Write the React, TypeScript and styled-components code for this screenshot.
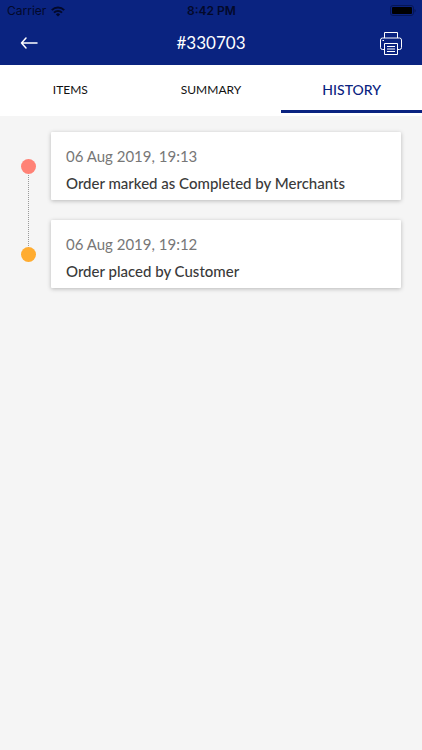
import React, { useState } from "react";
import styled, { createGlobalStyle } from "styled-components";

const GlobalStyle = createGlobalStyle`
  *, *::before, *::after { box-sizing: border-box; }
  body {
    margin: 0;
    background: #f5f5f5;
    font-family: Lato, "Liberation Sans", sans-serif;
  }
`;

const Page = styled.div`
  display: flex;
  flex-direction: column;
  min-height: 100vh;
  background: #f5f5f5;
`;

const Header = styled.header`
  background: #0a2380;
`;

const StatusBar = styled.div`
  display: grid;
  grid-template-columns: 1fr auto 1fr;
  align-items: center;
  height: 22px;
  padding: 0 6px 0 7px;
  color: #03092a;
  font-family: Inter, "Liberation Sans", sans-serif;
  font-size: 12px;
  line-height: 16px;
`;

const Carrier = styled.span`
  display: flex;
  align-items: center;
  gap: 5px;
`;

const Clock = styled.time`
  font-weight: 600;
`;

const Battery = styled.span`
  display: flex;
  justify-content: flex-end;
`;

const AppBar = styled.div`
  display: grid;
  grid-template-columns: 1fr auto 1fr;
  align-items: center;
  height: 43px;
  padding: 0 20px 1px;
`;

const Title = styled.h1`
  margin: 0;
  color: #fff;
  font-size: 17px;
  font-weight: 400;
  line-height: 24px;
`;

const IconButton = styled.button<{ $end?: boolean }>`
  display: flex;
  justify-self: ${({ $end }) => ($end ? "end" : "start")};
  padding: 0;
  border: 0;
  background: none;
  color: #fff;
  cursor: pointer;
`;

const Tabs = styled.div`
  display: grid;
  grid-template-columns: repeat(3, 1fr);
  height: 51px;
  padding-bottom: 3px;
  background: #fff;
`;

const Tab = styled.button<{ $active: boolean }>`
  padding: 5px 0 0;
  border: 0;
  border-bottom: 3px solid ${({ $active }) => ($active ? "#0a2380" : "transparent")};
  background: none;
  color: ${({ $active }) => ($active ? "#0a2380" : "#111")};
  font-family: inherit;
  font-size: ${({ $active }) => ($active ? 14 : 12)}px;
  font-weight: ${({ $active }) => ($active ? 500 : 400)};
  line-height: 20px;
  cursor: pointer;
`;

const Timeline = styled.ol`
  display: flex;
  flex-direction: column;
  gap: 20px;
  margin: 0;
  padding: 16px 21px 20px;
  list-style: none;
`;

const Entry = styled.li`
  position: relative;
  display: grid;
  grid-template-columns: 15px 1fr;
  column-gap: 15px;
  align-items: center;

  &:not(:last-child)::after {
    content: "";
    position: absolute;
    top: 50%;
    left: 7px;
    height: calc(100% + 20px);
    border-left: 1px dotted #999;
  }
`;

const Dot = styled.span<{ $color: string }>`
  z-index: 1;
  width: 15px;
  height: 15px;
  border-radius: 50%;
  background: ${({ $color }) => $color};
`;

const Card = styled.article`
  display: flex;
  flex-direction: column;
  gap: 5px;
  padding: 13px 15px 6px;
  border-radius: 1px;
  background: #fff;
  box-shadow: 0 1px 4px rgba(0, 0, 0, 0.25);
`;

const Stamp = styled.time`
  color: #777;
  font-size: 15px;
  line-height: 22px;
`;

const Message = styled.p`
  margin: 0;
  color: #3a3a3a;
  font-size: 15px;
  font-weight: 500;
  line-height: 22px;
`;

const WifiIcon = () => (
  <svg width="14" height="11" viewBox="0 0 14 11" aria-hidden="true">
    <g fill="none" stroke="currentColor" strokeWidth="2">
      <path d="M.8 4.1a8.8 8.8 0 0 1 12.4 0" />
      <path d="M3 6.6a5.7 5.7 0 0 1 8 0" />
    </g>
    <path fill="currentColor" d="M4.9 8.4a3 3 0 0 1 4.2 0L7 10.6z" />
  </svg>
);

const BatteryIcon = () => (
  <svg width="26" height="12" viewBox="0 0 26 12" aria-hidden="true">
    <rect x=".5" y=".5" width="23" height="10" rx="2.5" fill="none" stroke="#061655" />
    <rect x="2" y="2" width="20" height="7" rx="1" fill="#000" />
    <path d="M24.500 4v3.500q1.200-.5 1.200-1.750T24.500 4z" fill="#061655" />
  </svg>
);

const BackIcon = () => (
  <svg width="18" height="14" viewBox="0 0 18 14" fill="none" stroke="currentColor" strokeWidth="1.500" strokeLinecap="round" strokeLinejoin="round" aria-hidden="true">
    <path d="M17 7H1.500M6 2 1.500 7 6 12" />
  </svg>
);

const PrinterIcon = () => (
  <svg width="22" height="23" viewBox="0 0 22 23" fill="none" stroke="currentColor" strokeWidth="1" strokeLinejoin="round" aria-hidden="true">
    <path d="M4.500 6V.5h13V6" />
    <path d="M4.500 17.500h-2a2 2 0 0 1-2-2V8a2 2 0 0 1 2-2h17a2 2 0 0 1 2 2v7.500a2 2 0 0 1-2 2h-2" />
    <path d="M4.500 11.500h13v11h-13zM7 14.500h8M7 17h8M7 19.500h8M2.500 8.500h1.500" />
  </svg>
);

const tabs = ["ITEMS", "SUMMARY", "HISTORY"];

const events = [
  { stamp: "06 Aug 2019, 19:13", iso: "2019-08-06T19:13", text: "Order marked as Completed by Merchants", color: "#ff8276" },
  { stamp: "06 Aug 2019, 19:12", iso: "2019-08-06T19:12", text: "Order placed by Customer", color: "#ffac30" },
];

export default function App() {
  const [active, setActive] = useState("HISTORY");
  return (
    <Page>
      <GlobalStyle />
      <Header>
        <StatusBar>
          <Carrier>Carrier <WifiIcon /></Carrier>
          <Clock>8:42 PM</Clock>
          <Battery><BatteryIcon /></Battery>
        </StatusBar>
        <AppBar>
          <IconButton type="button" aria-label="Back"><BackIcon /></IconButton>
          <Title>#330703</Title>
          <IconButton type="button" aria-label="Print" $end><PrinterIcon /></IconButton>
        </AppBar>
      </Header>
      <Tabs role="tablist">
        {tabs.map((name) => (
          <Tab key={name} type="button" role="tab" aria-selected={name === active} $active={name === active} onClick={() => setActive(name)}>
            {name}
          </Tab>
        ))}
      </Tabs>
      <Timeline>
        {events.map((event) => (
          <Entry key={event.iso}>
            <Dot $color={event.color} />
            <Card>
              <Stamp dateTime={event.iso}>{event.stamp}</Stamp>
              <Message>{event.text}</Message>
            </Card>
          </Entry>
        ))}
      </Timeline>
    </Page>
  );
}
